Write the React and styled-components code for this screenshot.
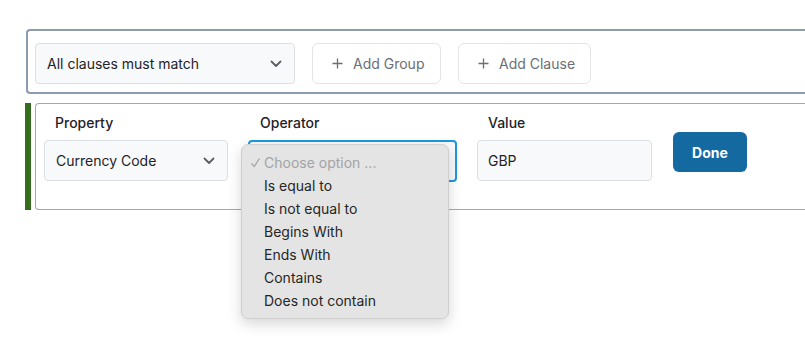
import React from 'react';
import styled, { createGlobalStyle } from 'styled-components';

const GlobalStyle = createGlobalStyle`
  body {
    margin: 0;
    background: #fff;
    font-family: Inter, "Noto Sans", "Liberation Sans", sans-serif;
    color: #1f2328;
  }
`;

const Page = styled.div`
  min-height: 346px;
  box-sizing: border-box;
  padding-top: 29px;
  overflow: hidden;
`;

const GroupBar = styled.div`
  display: flex;
  align-items: center;
  gap: 17px;
  margin-left: 26px;
  padding: 12px 0 8px 7px;
  border: 2px solid #8e9ab0;
  border-right: none;
  border-radius: 4px 0 0 4px;
`;

const Select = styled.div`
  display: flex;
  align-items: center;
  justify-content: space-between;
  box-sizing: border-box;
  width: ${(p) => p.$width}px;
  height: 41px;
  padding: 0 12px 0 11px;
  background: #f8f9fa;
  border: 1px solid #dcdfe4;
  border-radius: 4px;
  font-size: 14px;
  color: #1f2328;
`;

const OutlineButton = styled.button`
  display: flex;
  align-items: center;
  gap: 10px;
  box-sizing: border-box;
  width: ${(p) => p.$width}px;
  height: 41px;
  padding: 0 0 0 19px;
  background: #fff;
  border: 1px solid #e3e5e8;
  border-radius: 6px;
  font-family: inherit;
  font-size: 14px;
  color: #6b6e75;
`;

const ClauseRow = styled.div`
  display: flex;
  gap: 4px;
  margin: 9px 0 0 25px;
`;

const Accent = styled.div`
  width: 6px;
  background: #346d1e;
`;

const ClauseBox = styled.div`
  flex: 1;
  display: flex;
  align-items: flex-start;
  gap: 20px;
  height: 107px;
  box-sizing: border-box;
  padding: 9px 0 0 8px;
  border: 1px solid #a8a8a8;
  border-right: none;
  border-radius: 4px 0 0 4px;
`;

const Field = styled.div`
  position: relative;
  display: flex;
  flex-direction: column;
  gap: 7px;
`;

const Label = styled.div`
  padding-left: ${(p) => p.$indent ?? 11}px;
  font-size: 14px;
  line-height: 20px;
  font-weight: 500;
  color: #1f2328;
`;

const FocusSelect = styled.div`
  box-sizing: border-box;
  width: 209px;
  height: 42px;
  background: #f8f9fa;
  border: 2px solid #1e97de;
  border-radius: 4px;
`;

const Input = styled.div`
  display: flex;
  align-items: center;
  box-sizing: border-box;
  width: 175px;
  height: 41px;
  padding-left: 10px;
  background: #f8f9fa;
  border: 1px solid #dcdfe4;
  border-radius: 4px;
  font-size: 14px;
`;

const DoneButton = styled.button`
  margin-top: 19px;
  margin-left: 1px;
  width: 74px;
  height: 40px;
  background: #1369a0;
  color: #fff;
  border: none;
  border-radius: 6px;
  font-family: inherit;
  font-size: 14px;
  font-weight: 700;
`;

const Menu = styled.ul`
  position: absolute;
  z-index: 5;
  top: 31px;
  left: -7px;
  width: 208px;
  box-sizing: border-box;
  margin: 0;
  padding: 6px 0 6px;
  list-style: none;
  background: #e4e4e4;
  border: 1px solid #cfcfcf;
  border-radius: 7px;
  box-shadow: 0 5px 14px rgba(0, 0, 0, 0.16);
`;

const MenuItem = styled.li`
  position: relative;
  height: 23px;
  line-height: 23px;
  padding-left: 22px;
  font-size: 14px;
  color: ${(p) => (p.$muted ? '#a3a3a3' : '#262626')};
`;

const Check = styled.svg`
  position: absolute;
  left: 9px;
  top: 7px;
`;

const Chevron = () => (
  <svg width="12" height="8" viewBox="0 0 12 8" fill="none">
    <path d="M1.5 1.5 6 6l4.5-4.5" stroke="#5b5f66" strokeWidth="1.8" strokeLinecap="round" strokeLinejoin="round" />
  </svg>
);

const Plus = () => (
  <svg width="11" height="11" viewBox="0 0 11 11" fill="none">
    <path d="M5.5 0.5v10M0.5 5.5h10" stroke="#6b6e75" strokeWidth="1.3" />
  </svg>
);

const operators = ['Is equal to', 'Is not equal to', 'Begins With', 'Ends With', 'Contains', 'Does not contain'];

export default function App() {
  return (
    <Page>
      <GlobalStyle />
      <GroupBar>
        <Select $width={260}>
          All clauses must match
          <Chevron />
        </Select>
        <OutlineButton $width={129}>
          <Plus />
          Add Group
        </OutlineButton>
        <OutlineButton $width={133}>
          <Plus />
          Add Clause
        </OutlineButton>
      </GroupBar>
      <ClauseRow>
        <Accent />
        <ClauseBox>
          <Field>
            <Label>Property</Label>
            <Select $width={184}>
              Currency Code
              <Chevron />
            </Select>
          </Field>
          <Field>
            <Label $indent={12}>Operator</Label>
            <FocusSelect />
            <Menu>
              <MenuItem $muted>
                <Check width="9" height="10" viewBox="0 0 9 10" fill="none">
                  <path d="M0.8 5.6 3.2 8.6 8.2 0.8" stroke="#a3a3a3" strokeWidth="1.2" strokeLinecap="round" strokeLinejoin="round" />
                </Check>
                Choose option ...
              </MenuItem>
              {operators.map((op) => (
                <MenuItem key={op}>{op}</MenuItem>
              ))}
            </Menu>
          </Field>
          <Field>
            <Label>Value</Label>
            <Input>GBP</Input>
          </Field>
          <DoneButton>Done</DoneButton>
        </ClauseBox>
      </ClauseRow>
    </Page>
  );
}
